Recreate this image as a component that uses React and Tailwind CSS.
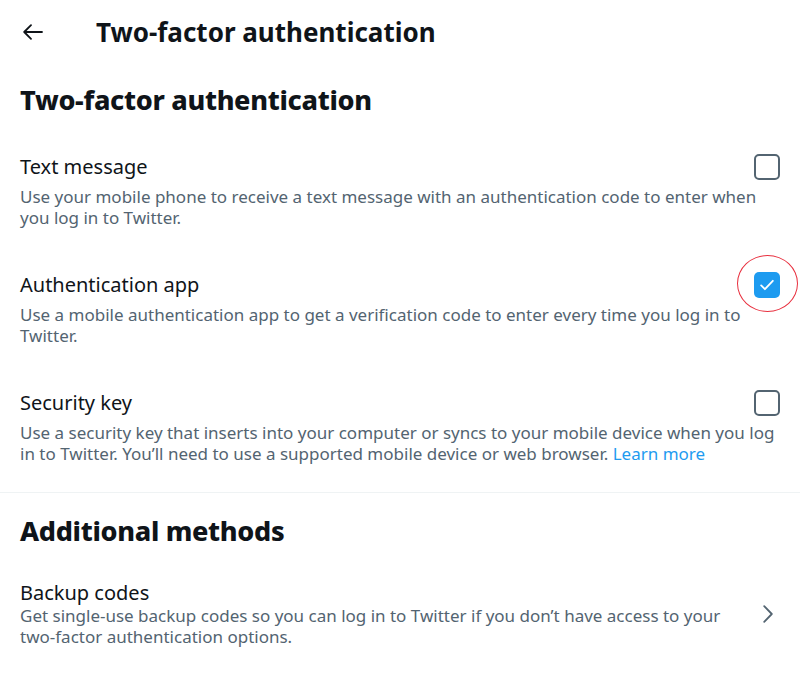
import React, { useState } from 'react';

const font = { fontFamily: '"Noto Sans", "Liberation Sans", sans-serif' };

const Checkbox = ({ checked, onChange }) => (
  <button
    onClick={onChange}
    className={`w-[26px] h-[26px] shrink-0 rounded-[5px] flex items-center justify-center ${
      checked ? 'bg-[#1d9bf0]' : 'border-2 border-[#536471] bg-white'
    }`}
  >
    {checked && (
      <svg viewBox="0 0 24 24" className="w-[20px] h-[20px]" fill="none" stroke="white" strokeWidth="2.2" strokeLinecap="round" strokeLinejoin="round">
        <path d="M5 12.5l4.5 4.5L19 7" />
      </svg>
    )}
  </button>
);

const Option = ({ title, children, checked, onToggle, marked }) => (
  <div>
    <div className="flex items-center justify-between h-[28px]">
      <div className="text-[20px] leading-[28px] text-[#0f1419]">{title}</div>
      <div className="relative">
        <Checkbox checked={checked} onChange={onToggle} />
        {marked && (
          <span className="absolute left-[-17px] top-[-17px] w-[61px] h-[57px] rounded-[50%] border border-[#e8303f] pointer-events-none" />
        )}
      </div>
    </div>
    <p className="mt-[5px] text-[17px] leading-[21px] text-[#536471]">{children}</p>
  </div>
);

export default function App() {
  const [methods, setMethods] = useState({ sms: false, app: true, key: false });
  const toggle = (k) => setMethods((m) => ({ ...m, [k]: !m[k] }));

  return (
    <div className="w-[800px] h-[678px] bg-white overflow-hidden" style={font}>
      <div className="h-[64px] flex items-center">
        <button className="w-[96px] pl-[23px] h-full flex items-center">
          <svg viewBox="0 0 20 16" className="w-[20px] h-[16px]" fill="none" stroke="#0f1419" strokeWidth="1.8" strokeLinecap="round" strokeLinejoin="round">
            <path d="M19 8H1.5M8 1.2L1.2 8L8 14.8" />
          </svg>
        </button>
        <h1 className="text-[26px] font-bold text-[#0f1419]">Two-factor authentication</h1>
      </div>

      <div className="px-[20px] pt-[18px]">
        <h2 className="text-[27px] leading-[36px] font-extrabold tracking-[-0.3px] text-[#0f1419]">Two-factor authentication</h2>

        <div className="mt-[35px] flex flex-col gap-[43px]">
          <Option title="Text message" checked={methods.sms} onToggle={() => toggle('sms')}>
            Use your mobile phone to receive a text message with an authentication code to enter when you log in to Twitter.
          </Option>
          <Option title="Authentication app" checked={methods.app} onToggle={() => toggle('app')} marked>
            Use a mobile authentication app to get a verification code to enter every time you log in to Twitter.
          </Option>
          <Option title="Security key" checked={methods.key} onToggle={() => toggle('key')}>
            Use a security key that inserts into your computer or syncs to your mobile device when you log in to Twitter. You’ll need to use a supported mobile device or web browser.{' '}
            <a href="#" className="text-[#1d9bf0]">Learn more</a>
          </Option>
        </div>
      </div>

      <div className="mt-[28px] h-px bg-[#eff3f4]" />

      <div className="px-[20px] pt-[20px]">
        <h2 className="text-[27px] leading-[36px] font-extrabold tracking-[-0.3px] text-[#0f1419]">Additional methods</h2>
        <div className="mt-[32px] flex items-center justify-between gap-6">
          <div className="flex-1">
            <div className="text-[20px] leading-[24px] text-[#0f1419]">Backup codes</div>
            <p className="text-[17px] leading-[21px] text-[#536471]">
              Get single-use backup codes so you can log in to Twitter if you don’t have access to your two-factor authentication options.
            </p>
          </div>
          <svg viewBox="0 0 10 18" className="w-[10px] h-[18px] mr-[7px]" fill="none" stroke="#536471" strokeWidth="1.8" strokeLinecap="round" strokeLinejoin="round">
            <path d="M1.2 1.2L8.8 9L1.2 16.8" />
          </svg>
        </div>
      </div>
    </div>
  );
}
